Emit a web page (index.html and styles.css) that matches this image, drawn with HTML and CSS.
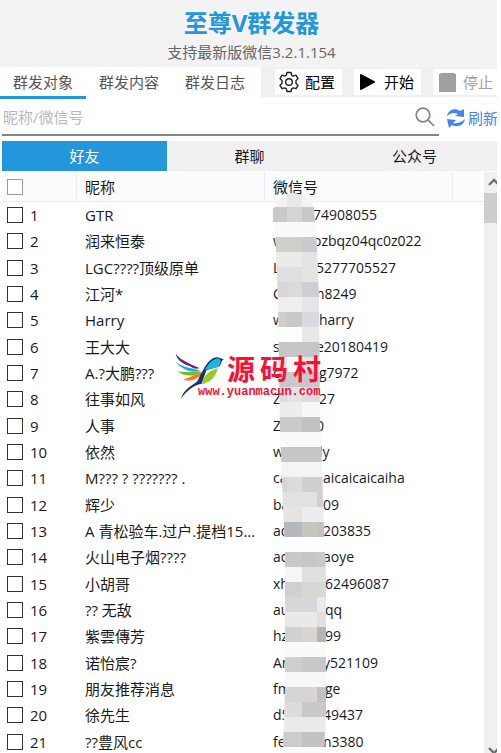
FILE: index.html
```html
<!DOCTYPE html>
<html lang="zh-CN">
<head>
    <meta charset="UTF-8">
    <meta name="viewport" content="width=device-width, initial-scale=1.0">
    <title>至尊V群发器</title>
    <link rel="stylesheet" href="styles.css">
</head>
<body>
    <div class="app">
        <header class="header">
            <h1>至尊V群发器</h1>
            <p>支持最新版微信3.2.1.154</p>
        </header>

        <div class="toolbar">
            <nav class="tabs">
                <button class="tab active" type="button">群发对象</button>
                <button class="tab" type="button">群发内容</button>
                <button class="tab" type="button">群发日志</button>
            </nav>
            <div class="actions">
                <button class="action" type="button">
                    <svg width="22" height="22" viewBox="0 0 22 22" fill="none" stroke="#222" stroke-width="1.4" stroke-linejoin="round">
                        <path d="M9 1.5h4l.6 2.6 1.8 1 2.6-.9 2 3.4-2 1.9v2.9l2 1.9-2 3.4-2.6-.8-1.8 1-.6 2.6H9l-.6-2.6-1.8-1-2.6.8-2-3.4 2-1.9V9.500l-2-1.900 2-3.400 2.600.900 1.800-1z"/>
                        <circle cx="11" cy="11" r="3.300"/>
                    </svg>
                    配置
                </button>
                <button class="action" type="button">
                    <svg width="22" height="22" viewBox="0 0 22 22"><path d="M3 3.500 4 3l14 7.500v1L4 19l-1-.5z" fill="#000"/></svg>
                    开始
                </button>
                <button class="action" type="button" disabled>
                    <svg width="22" height="22" viewBox="0 0 22 22"><path d="M3 3h1l1-1h13l1 1h1v18H3z" fill="#a0a0a0"/></svg>
                    停止
                </button>
            </div>
        </div>

        <div class="search-row">
            <div class="search">
                <input type="text" placeholder="昵称/微信号" aria-label="昵称/微信号">
                <svg width="20" height="20" viewBox="0 0 20 20" fill="none" stroke="#858585" stroke-width="1.7"><circle cx="8" cy="8" r="6.800"/><path d="m13 13 6 6"/></svg>
            </div>
            <button class="refresh" type="button">
                <svg width="20" height="22" viewBox="0 0 20 22" fill="#4384f5">
                    <path d="M1 9C2 3 9 0 14 4l4-2v8l-9-1 3-2C8 5 4 6 1 9z"/>
                    <path d="M19 12c-1 6-7 9-13 6l-3 3-2-9 9 1-3 3c4 1 9-1 12-4z"/>
                </svg>
                刷新
            </button>
        </div>

        <nav class="groups">
            <button class="group active" type="button">好友</button>
            <button class="group" type="button">群聊</button>
            <button class="group" type="button">公众号</button>
        </nav>

        <main class="list">
            <div class="table-wrap">
                <table>
                    <colgroup><col class="col-num"><col class="col-name"><col class="col-id"><col></colgroup>
                    <thead>
                        <tr><th><input type="checkbox" aria-label="全选"></th><th>昵称</th><th>微信号</th><th></th></tr>
                    </thead>
                    <tbody>
                        <tr><td><label><input type="checkbox">1</label></td><td>GTR</td><td><span class="w40">V</span>74908055</td><td></td></tr>
                        <tr><td><label><input type="checkbox">2</label></td><td>润来恒泰</td><td><span class="w40">w</span>ozbqz04qc0z022</td><td></td></tr>
                        <tr><td><label><input type="checkbox">3</label></td><td>LGC????顶级原单</td><td><span class="w43">L</span>5277705527</td><td></td></tr>
                        <tr><td><label><input type="checkbox">4</label></td><td>江河*</td><td><span class="w43">C</span>n8249</td><td></td></tr>
                        <tr><td><label><input type="checkbox">5</label></td><td>Harry</td><td><span class="w46">w</span>harry</td><td></td></tr>
                        <tr><td><label><input type="checkbox">6</label></td><td>王大大</td><td><span class="w43">s</span>e20180419</td><td></td></tr>
                        <tr><td><label><input type="checkbox">7</label></td><td>A.?大鹏???</td><td><span class="w46">c</span>g7972</td><td></td></tr>
                        <tr><td><label><input type="checkbox">8</label></td><td>往事如风</td><td><span class="w46">Z</span>27</td><td></td></tr>
                        <tr><td><label><input type="checkbox">9</label></td><td>人事</td><td><span class="w43">Z</span>0</td><td></td></tr>
                        <tr><td><label><input type="checkbox">10</label></td><td>依然</td><td><span class="w46">w</span>ly</td><td></td></tr>
                        <tr><td><label><input type="checkbox">11</label></td><td>M??? ? ??????? .</td><td><span class="w50">ca</span>aicaicaicaiha</td><td></td></tr>
                        <tr><td><label><input type="checkbox">12</label></td><td>辉少</td><td><span class="w50">ba</span>09</td><td></td></tr>
                        <tr><td><label><input type="checkbox">13</label></td><td>A 青松验车.过户.提档15...</td><td><span class="w50">ad</span>203835</td><td></td></tr>
                        <tr><td><label><input type="checkbox">14</label></td><td>火山电子烟????</td><td><span class="w50">ad</span>aoye</td><td></td></tr>
                        <tr><td><label><input type="checkbox">15</label></td><td>小胡哥</td><td><span class="w52">xh</span>62496087</td><td></td></tr>
                        <tr><td><label><input type="checkbox">16</label></td><td>?? 无敌</td><td><span class="w52">au</span>qq</td><td></td></tr>
                        <tr><td><label><input type="checkbox">17</label></td><td>紫雲傳芳</td><td><span class="w52">hz</span>99</td><td></td></tr>
                        <tr><td><label><input type="checkbox">18</label></td><td>诺怡宸?</td><td><span class="w50">An</span>y521109</td><td></td></tr>
                        <tr><td><label><input type="checkbox">19</label></td><td>朋友推荐消息</td><td><span class="w52">fm</span>ge</td><td></td></tr>
                        <tr><td><label><input type="checkbox">20</label></td><td>徐先生</td><td><span class="w50">d5</span>49437</td><td></td></tr>
                        <tr><td><label><input type="checkbox">21</label></td><td>??豊风cc</td><td><span class="w50">fe</span>n3380</td><td></td></tr>
                    </tbody>
                </table>

                <!-- mosaic over the ids -->
                <svg class="mosaic" width="56" height="561" viewBox="272 192 56 561" aria-hidden="true">
                    <defs>
                        <clipPath id="strip"><path d="M273 210Q278 195 292 193Q309 194 314 208L315 222 317 250 319 300 320 420 322 470 324 530 326 575 326 710 324 753H283L285 690 285 550 282 480 280 430 278 300 276 250 275 222 273 222z"/></clipPath>
                    </defs>
                    <g clip-path="url(#strip)" shape-rendering="crispEdges">
                        <path fill="#f2f2f2" d="M272 192h56v561h-56z"/>
                        <path fill="#e7e8ea" d="M287 192h15v15h-15z"/>
                        <path fill="#c9c9c9" d="M272 207h56v15h-56z"/><path fill="#d5d5d2" d="M287 207h15v15h-15z"/>
                        <path fill="#fafafb" d="M272 222h56v15h-56z"/>
                        <path fill="#cfcfcc" d="M272 237h30v15h-30z"/><path fill="#c8cbcd" d="M302 237h26v15h-26z"/>
                        <path fill="#ebebea" d="M272 252h30v15h-30z"/><path fill="#e4e4e2" d="M302 252h26v15h-26z"/>
                        <path fill="#dfdfe1" d="M272 267h30v15h-30z"/><path fill="#e5e4e2" d="M302 267h26v15h-26z"/>
                        <path fill="#d8d6d8" d="M272 282h15v15h-15z"/><path fill="#dcdbd8" d="M287 282h15v15h-15z"/><path fill="#d0ced2" d="M302 282h26v15h-26z"/>
                        <path fill="#efeeef" d="M272 297h30v15h-30z"/><path fill="#e6e6e9" d="M302 297h26v15h-26z"/>
                        <path fill="#cfcecc" d="M272 312h15v15h-15z"/><path fill="#c9c9cb" d="M287 312h15v15h-15z"/><path fill="#d7dadf" d="M302 312h26v15h-26z"/>
                        <path fill="#fdfdfc" d="M272 327h30v15h-30z"/><path fill="#e8e8e8" d="M302 327h26v15h-26z"/>
                        <path fill="#c6c5c7" d="M272 342h56v15h-56z"/>
                        <path fill="#e6e6e7" d="M272 357h56v15h-56z"/><path fill="#f6f8f7" d="M287 357h15v15h-15z"/>
                        <path fill="#c9c8c9" d="M272 372h56v15h-56z"/>
                        <path fill="#dcdcde" d="M272 387h56v15h-56z"/><path fill="#e5e3e7" d="M287 387h15v15h-15z"/>
                        <path fill="#ededee" d="M272 402h30v15h-30z"/><path fill="#f8f8f8" d="M302 402h26v15h-26z"/>
                        <path fill="#cacac6" d="M272 417h30v15h-30z"/><path fill="#c1c3c2" d="M302 417h26v15h-26z"/>
                        <path fill="#fafafa" d="M272 432h56v15h-56z"/>
                        <path fill="#c7c7c8" d="M272 447h56v15h-56z"/>
                        <path fill="#f4f4f4" d="M272 462h56v15h-56z"/>
                        <path fill="#d5d5d5" d="M272 477h15v15h-15z"/><path fill="#dcdce0" d="M287 477h15v15h-15z"/><path fill="#cfcfd2" d="M302 477h26v15h-26z"/>
                        <path fill="#e1e1e1" d="M272 492h45v15h-45z"/><path fill="#d0d0d0" d="M317 492h11v15h-11z"/>
                        <path fill="#e8e3e3" d="M272 507h30v15h-30z"/><path fill="#ebedef" d="M302 507h26v15h-26z"/>
                        <path fill="#b4b8bc" d="M272 522h30v15h-30z"/><path fill="#c6c5be" d="M302 522h15v15h-15z"/><path fill="#c0c1c2" d="M317 522h11v15h-11z"/>
                        <path fill="#fdfdfd" d="M272 537h56v15h-56z"/>
                        <path fill="#c9c9cb" d="M272 552h56v15h-56z"/><path fill="#cac5c5" d="M302 552h15v15h-15z"/>
                        <path fill="#f6f6f6" d="M272 567h30v15h-30z"/><path fill="#e0e0e0" d="M302 567h26v15h-26z"/>
                        <path fill="#cfd0d1" d="M272 582h30v15h-30z"/><path fill="#d7d7d4" d="M302 582h26v15h-26z"/>
                        <path fill="#d7d7da" d="M272 597h45v15h-45z"/><path fill="#eaeaea" d="M317 597h11v15h-11z"/>
                        <path fill="#e9e9e9" d="M272 612h45v15h-45z"/><path fill="#e0e0e0" d="M317 612h11v15h-11z"/>
                        <path fill="#d0d1d1" d="M272 627h30v15h-30z"/><path fill="#d8d5cf" d="M302 627h15v15h-15z"/><path fill="#b2b4b8" d="M317 627h11v15h-11z"/>
                        <path fill="#fbfaf9" d="M272 642h56v15h-56z"/>
                        <path fill="#d0cdce" d="M272 657h30v15h-30z"/><path fill="#c8c8c8" d="M302 657h26v15h-26z"/>
                        <path fill="#f6f8f8" d="M272 672h56v15h-56z"/>
                        <path fill="#d6d4d5" d="M272 687h45v15h-45z"/><path fill="#c2c0c2" d="M317 687h11v15h-11z"/>
                        <path fill="#dcdcdf" d="M272 702h30v15h-30z"/><path fill="#c9c9c9" d="M302 702h26v15h-26z"/>
                        <path fill="#eaeaea" d="M272 717h56v15h-56z"/>
                        <path fill="#cecbcc" d="M272 732h30v15h-30z"/><path fill="#c2c2c2" d="M302 732h26v15h-26z"/>
                        <path fill="#fafafa" d="M272 747h56v6h-56z"/>
                    </g>
                </svg>
            </div>
            <div class="scrollbar" aria-hidden="true">
                <svg width="13" height="21" viewBox="0 0 13 21" fill="none" stroke="#707070" stroke-width="2.400"><path d="m5 13 5-5 5 5"/></svg>
                <div class="thumb"></div>
                <svg class="down" width="13" height="8" viewBox="0 0 13 8" fill="none" stroke="#707070" stroke-width="2.400"><path d="m5 3 5 5 5-5"/></svg>
            </div>
        </main>

        <div class="watermark">
            <svg width="50" height="46" viewBox="45 40 150 138">
                <path fill="#6b2387" d="M47 42C65 65 95 73 119 86 103 90 96 83 88 79 67 72 51 60 47 42z"/>
                <path fill="#1aa7df" d="M47 66C65 82 93 84 121 93 103 99 72 96 47 66z"/>
                <path fill="#75bc21" d="M53 94C77 101 96 93 127 96 105 109 74 115 53 94z"/>
                <path fill="#f47b20" d="M68 119C86 118 103 103 130 98 116 118 91 130 68 119z"/>
                <path fill="#19306e" d="M125 99C139 74 151 53 173 53L191 59C185 62 183 71 180 79L139 92 125 132C98 136 76 159 62 177 72 150 94 138 109 128 117 120 117 111 125 99z"/>
                <path fill="#1ab8df" d="M134 91C145 71 159 58 174 56 185 58 184 74 173 83 159 88 146 87 134 91z"/>
                <path fill="#9bcb1c" d="M127 134C128 112 141 96 174 85 166 113 152 127 127 134z"/>
            </svg>
            <div class="watermark-text">
                <div class="brand"><b>源</b><b>码</b><b>村</b></div>
                <span>www.yuanmacun.com</span>
            </div>
        </div>
    </div>
</body>
</html>
```

FILE: styles.css
```css
* {
    box-sizing: border-box;
}

body {
    margin: 0;
    background: #fff;
    color: #1a1a1a;
    font-family: "Open Sans", "Noto Sans CJK SC", sans-serif;
    font-size: 15px;
    line-height: 20px;
}

button,
input {
    font: inherit;
    color: inherit;
    border: 0;
    padding: 0;
    margin: 0;
    background: none;
}

svg {
    flex: none;
    display: block;
}

.app {
    position: relative;
    display: flex;
    flex-direction: column;
    height: 100vh;
    margin-right: 4px;
    overflow: hidden;
}

/* Title */
.header {
    height: 67px;
    padding: 8px 0 0 6px;
    background: #f3f3f3;
    text-align: center;
}

.header h1 {
    margin: 0;
    color: #2396dc;
    font-size: 24px;
    line-height: 30px;
}

.header p {
    margin: 4px 0 0;
    color: #666;
    font-size: 15px;
}

/* Main tabs and actions */
.toolbar {
    display: flex;
    height: 32px;
}

.tabs {
    display: flex;
    flex: none;
    padding-right: 3px;
}

.tab {
    width: 86px;
    border-bottom: 3px solid transparent;
    color: #555;
}

.tab.active {
    border-color: #2396dc;
}

.actions {
    display: flex;
    flex: 1;
    gap: 12px;
    height: 30px;
    padding: 2px 0 2px 14px;
    overflow: hidden;
    background: #f0f0f0;
}

.action {
    display: flex;
    flex: none;
    align-items: center;
    gap: 5px;
    width: 67px;
    padding-left: 3px;
    background: #fff;
    color: #000;
    white-space: nowrap;
}

.action:disabled {
    color: #a0a0a0;
}

/* Search */
.search-row {
    display: flex;
    gap: 7px;
    height: 42px;
    padding: 0 0 5px 2px;
}

.search {
    display: flex;
    flex: 1;
    align-items: center;
    padding-right: 4px;
    border-bottom: 2px solid #858585;
}

.search input {
    flex: 1;
    min-width: 0;
    padding-left: 1px;
    outline: none;
}

.search input::placeholder {
    color: #b8b8b8;
    opacity: 1;
}

.refresh {
    display: flex;
    flex: none;
    align-items: center;
    gap: 2px;
    width: 51px;
    color: #4384f5;
    white-space: nowrap;
}

/* Contact groups */
.groups {
    display: flex;
    height: 30px;
    margin-left: 2px;
    background: #f0f0f0;
}

.group {
    flex: 1;
}

.group.active {
    background: #2396dc;
    color: #fff;
}

/* Contact list */
.list {
    display: flex;
    flex: 1;
    min-height: 0;
    margin: 1px 0 0 2px;
}

.table-wrap {
    position: relative;
    flex: 1;
    overflow: hidden;
}

table {
    width: 100%;
    table-layout: fixed;
    border-collapse: separate;
    border-spacing: 0;
}

.col-num {
    width: 75px;
}

.col-name,
.col-id {
    width: 188px;
}

th,
td {
    height: 26px;
    padding: 0 5px 0 8px;
    overflow: hidden;
    text-align: left;
    text-overflow: ellipsis;
    white-space: nowrap;
}

tbody tr:nth-child(3n) td {
    height: 27px;
}

th {
    height: 30px;
    border-right: 1px solid #e3eefb;
    border-bottom: 1px solid #e3eefb;
    background: #fcfcfc;
    font-weight: normal;
}

th:last-child {
    border-right: 0;
}

th:first-child,
td:first-child {
    padding-left: 5px;
}

td:nth-child(3) {
    font-size: 14px;
}

label {
    display: flex;
    align-items: center;
    gap: 7px;
}

input[type="checkbox"] {
    display: block;
    width: 16px;
    height: 16px;
    appearance: none;
    border: 1px solid #333;
    background: #fff;
}

th input[type="checkbox"] {
    border-color: #999;
}

.w40,
.w43,
.w46,
.w50,
.w52 {
    display: inline-block;
}

.w40 { width: 40px; }
.w43 { width: 43px; }
.w46 { width: 46px; }
.w50 { width: 50px; }
.w52 { width: 52px; }

.mosaic {
    position: absolute;
    top: 20px;
    left: 270px;
}

.scrollbar {
    display: flex;
    flex-direction: column;
    width: 13px;
    background: #f0f0f0;
}

.thumb {
    height: 30px;
    background: #cdcdcd;
}

.down {
    margin-top: auto;
}

/* Watermark over the list */
.watermark {
    position: absolute;
    top: 353px;
    left: 175px;
    display: flex;
    color: #fa0f35;
    pointer-events: none;
}

.watermark-text {
    display: flex;
    flex-direction: column;
    margin-left: -27px;
}

.brand {
    display: flex;
    gap: 5px;
    padding-left: 29px;
    font-size: 28px;
    line-height: 32px;
}

.watermark span {
    font-family: "Liberation Mono", monospace;
    font-size: 12px;
    font-weight: bold;
    line-height: 14px;
}
```
